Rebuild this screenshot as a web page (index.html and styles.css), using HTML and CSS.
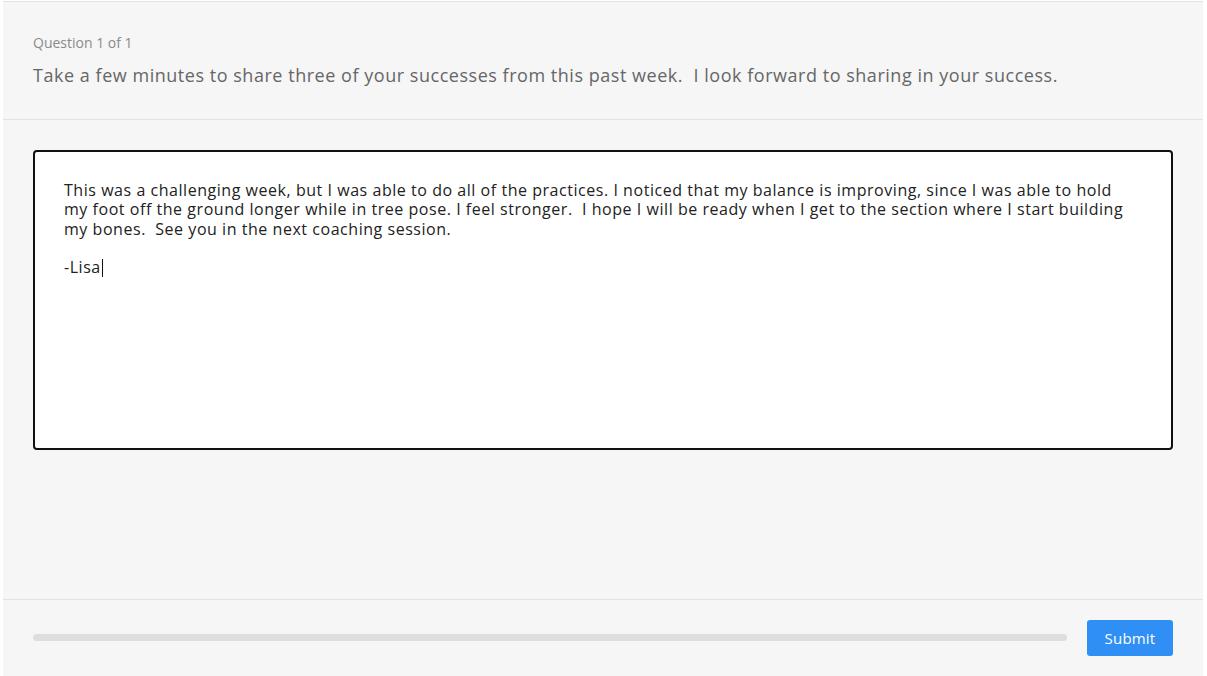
FILE: index.html
```html
<!DOCTYPE html>
<html lang="en">
<head>
<meta charset="utf-8">
<title>Question 1 of 1</title>
<link rel="stylesheet" href="styles.css">
</head>
<body>
<div class="panel">
  <header class="q-header">
    <div class="q-count">Question 1 of 1</div>
    <h1 class="q-title">Take a few minutes to share three of your successes from this past week.&nbsp; I look forward to sharing in your success.</h1>
  </header>
  <main class="q-body">
    <div class="answer" role="textbox" aria-multiline="true">
      <span class="line">This was a challenging week, but I was able to do all of the practices. I noticed that my balance is improving, since I was able to hold</span>
      <span class="line">my foot off the ground longer while in tree pose. I feel stronger.&nbsp; I hope I will be ready when I get to the section where I start building</span>
      <span class="line">my bones.&nbsp; See you in the next coaching session.</span>
      <span class="line">&nbsp;</span>
      <span class="line">-Lisa<span class="caret"></span></span>
    </div>
  </main>
  <footer class="q-footer">
    <div class="progress"><div class="progress-fill"></div></div>
    <button class="submit" type="button">Submit</button>
  </footer>
</div>
</body>
</html>
```

FILE: styles.css
```css
html, body {
  margin: 0;
  padding: 0;
  background: #ffffff;
  font-family: "Open Sans", "Noto Sans", "DejaVu Sans", sans-serif;
}

.panel {
  width: 1200px;
  margin: 1px 0 0 3px;
  border-top: 1px solid #e3e3e3;
  background: #f6f6f6;
  display: flex;
  flex-direction: column;
  height: 675px;
  box-sizing: border-box;
}

.q-header {
  height: 118px;
  box-sizing: border-box;
  padding: 31px 30px 0 30px;
  border-bottom: 1px solid #e2e2e2;
}

.q-count {
  font-size: 14px;
  line-height: 20px;
  color: #8a8a8a;
}

.q-title {
  margin: 10px 0 0 0;
  font-size: 18px;
  line-height: 24px;
  font-weight: 400;
  letter-spacing: 0.53px;
  color: #666666;
}

.q-body {
  flex: 1;
  padding: 30px;
  border-bottom: 1px solid #e2e2e2;
}

.answer {
  width: 1140px;
  height: 300px;
  box-sizing: border-box;
  border: 2px solid #111111;
  border-radius: 4px;
  background: #ffffff;
  padding: 29px 29px;
  font-size: 16px;
  line-height: 19.3px;
  letter-spacing: 0.54px;
  color: #222222;
}

.line {
  display: block;
  white-space: nowrap;
}

.caret {
  display: inline-block;
  width: 1px;
  height: 18px;
  margin-left: 1px;
  background: #111;
  vertical-align: -4px;
}

.q-footer {
  height: 76px;
  box-sizing: border-box;
  padding: 20px 30px 0 30px;
  display: flex;
  align-items: flex-start;
  gap: 20px;
}

.progress {
  flex: 1;
  height: 7px;
  margin-top: 14px;
  border-radius: 4px;
  background: #dedede;
}

.progress-fill {
  width: 0;
  height: 100%;
}

.submit {
  width: 86px;
  height: 36px;
  border: 0;
  border-radius: 3px;
  background: #2f8ff5;
  color: #ffffff;
  font-family: inherit;
  font-size: 15px;
  letter-spacing: 0.2px;
  padding: 0 0 1px 0;
}
```
